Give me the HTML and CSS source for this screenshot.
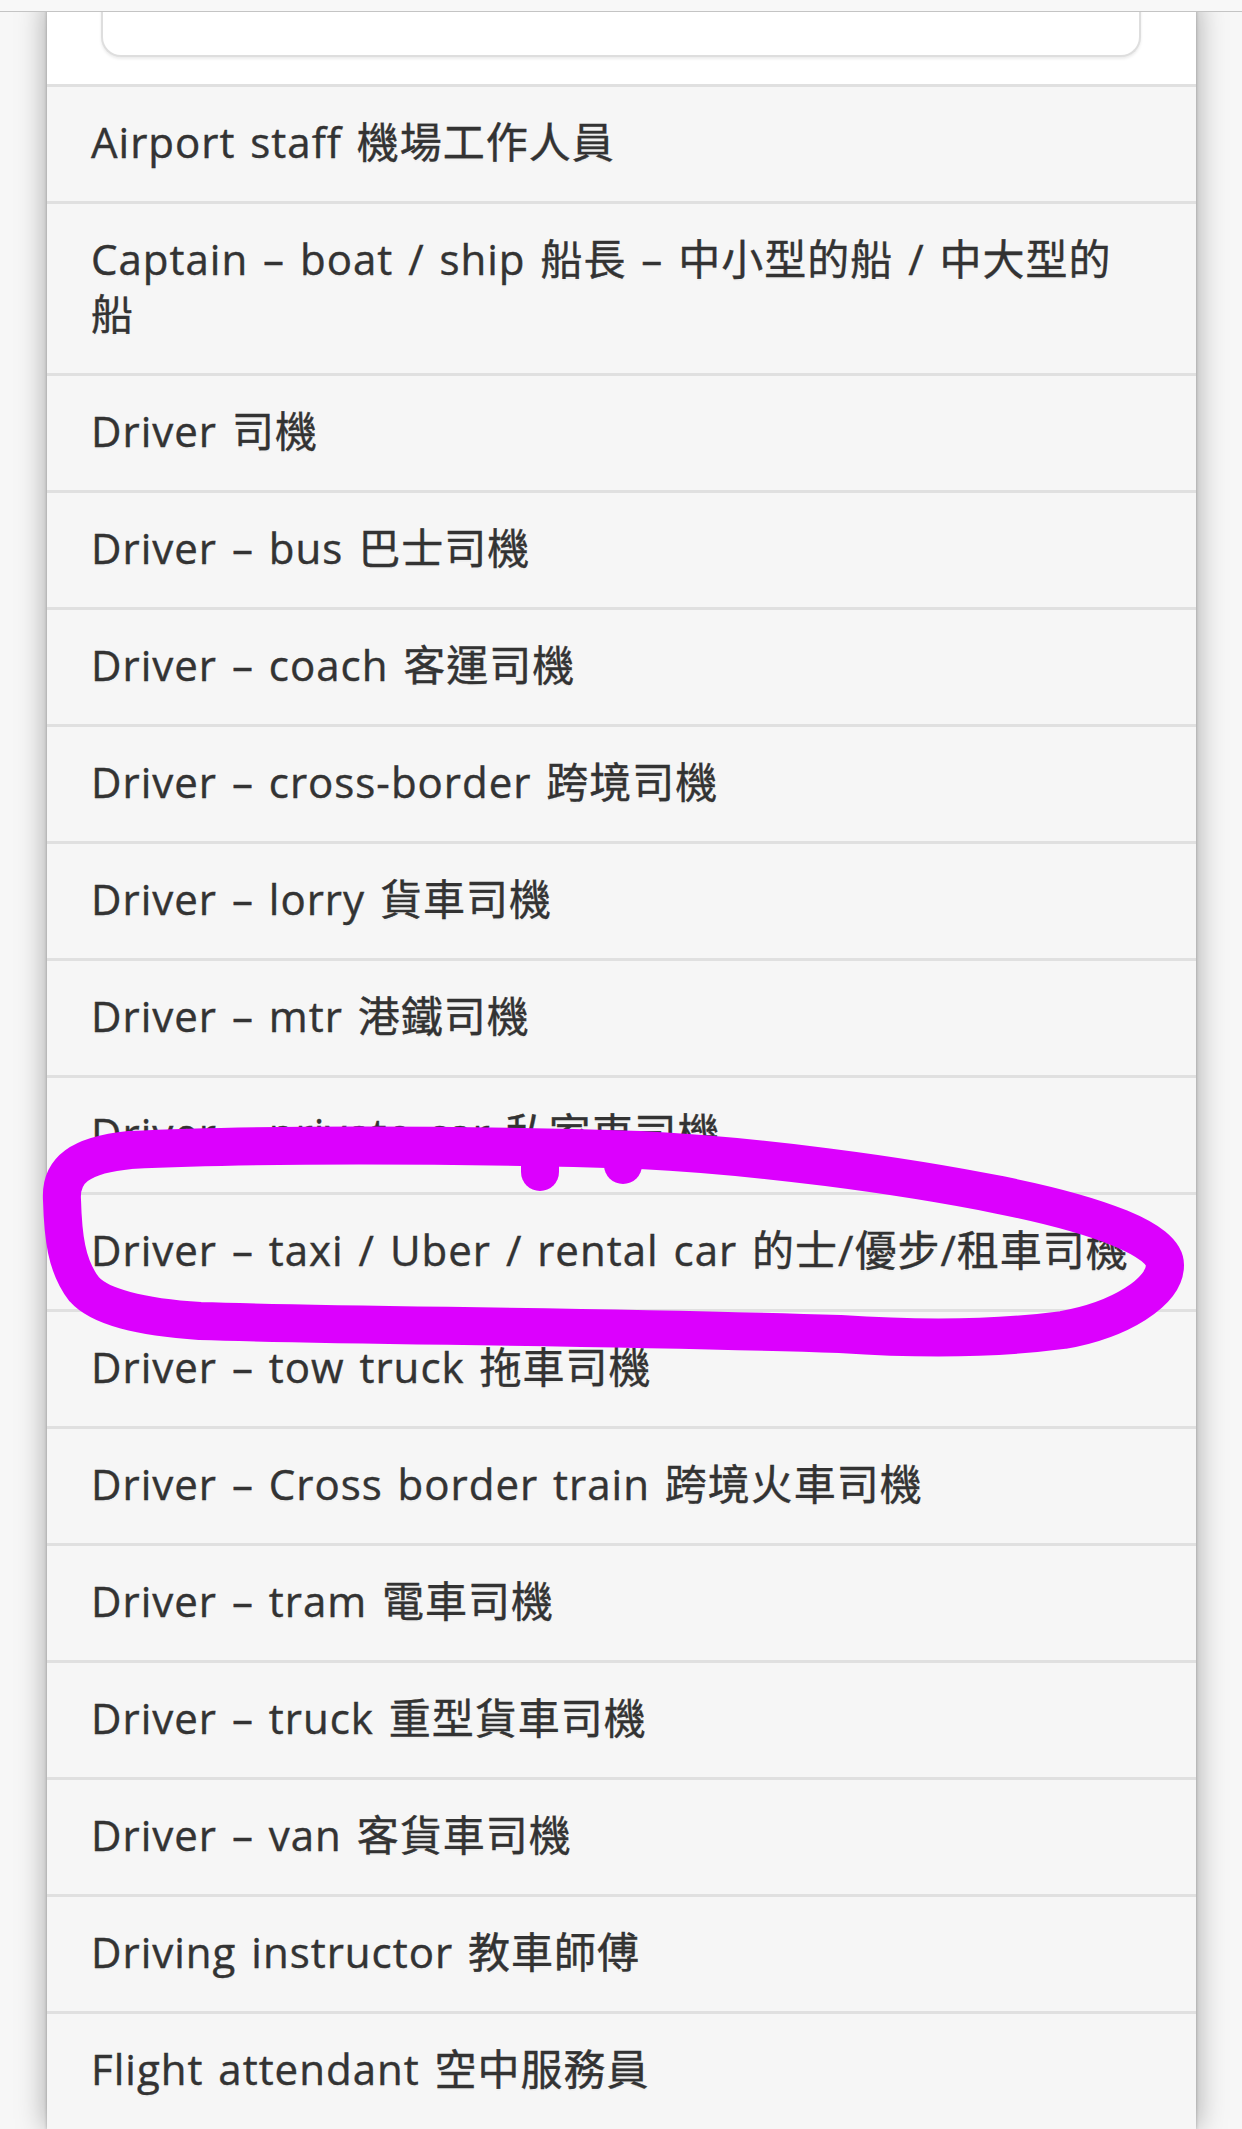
FILE: index.html
```html
<!DOCTYPE html>
<html lang="zh-Hant">
<head>
  <meta charset="utf-8">
  <title>職業</title>
  <meta name="viewport" content="width=device-width, initial-scale=1">
  <link rel="stylesheet" href="styles.css">
</head>
<body>
  <header class="topbar"></header>
  <main class="panel">
    <div class="search"><div class="search-box"></div></div>
    <ul class="listview">
      <li>Airport staff 機場工作人員</li>
      <li>Captain – boat / ship 船長 – 中小型的船 / 中大型的船</li>
      <li>Driver 司機</li>
      <li>Driver – bus 巴士司機</li>
      <li>Driver – coach 客運司機</li>
      <li>Driver – cross-border 跨境司機</li>
      <li>Driver – lorry 貨車司機</li>
      <li>Driver – mtr 港鐵司機</li>
      <li>Driver – private car 私家車司機</li>
      <li>Driver – taxi / Uber / rental car 的士/優步/租車司機</li>
      <li>Driver – tow truck 拖車司機</li>
      <li>Driver – Cross border train 跨境火車司機</li>
      <li>Driver – tram 電車司機</li>
      <li>Driver – truck 重型貨車司機</li>
      <li>Driver – van 客貨車司機</li>
      <li>Driving instructor 教車師傅</li>
      <li>Flight attendant 空中服務員</li>
    </ul>
  </main>
  <!-- hand-drawn highlight loop on top of the list -->
  <svg class="scribble" width="1242" height="2129" viewBox="0 0 1242 2129">
    <g fill="none" stroke="#dc00fe" stroke-width="38" stroke-linecap="round" stroke-linejoin="round">
      <path d="M62,1200 C60,1170 80,1155 130,1150 C250,1144 450,1144 640,1150 C760,1156 900,1175 1000,1195 C1100,1215 1165,1240 1165,1265 C1165,1292 1120,1320 1063,1330 C980,1341 900,1338 840,1334 C600,1326 350,1326 200,1321 C140,1317 100,1307 84,1289 C66,1266 63,1235 62,1200 Z"/>
      <path d="M540,1165 L540,1172"/>
      <path d="M623,1164 L623,1165"/>
    </g>
  </svg>
</body>
</html>
```
FILE: styles.css
```css
* {
  margin: 0;
  padding: 0;
  box-sizing: border-box;
}

:root {
  --page: #f7f7f7;
  --item: #f6f6f6;
  --line: #e0e0e0;
  --text: #333;
}

body {
  background: var(--page);
  color: var(--text);
  font-family: "Open Sans", "Noto Sans CJK TC", sans-serif;
  font-size: 42px;
  overflow: hidden;
}

.topbar {
  position: fixed;
  top: 0;
  left: 0;
  right: 0;
  height: 12px;
  background: #f8f8f8;
  border-bottom: 1px solid #c4c4c4;
  z-index: 2;
}

.panel {
  margin: 0 46px 0 47px;
  background: var(--item);
  min-height: 2129px;
  box-shadow: 0 0 3px rgba(0, 0, 0, .25), 0 0 28px rgba(0, 0, 0, .35);
}

.search {
  background: #fff;
  padding: 0 55px 27px 54px;
}

.search-box {
  height: 57px;
  background: #fff;
  border: 2px solid #dedede;
  border-top: 0;
  border-radius: 0 0 20px 20px;
  box-shadow: 0 2px 3px rgba(0, 0, 0, .08);
}

.listview {
  list-style: none;
  background: var(--item);
}

.listview li {
  border-top: 3px solid var(--line);
  padding: 26.5px 52px 32.5px 44px;
  line-height: 55px;
  letter-spacing: 1px;
  word-spacing: 3px;
  -webkit-text-stroke: .4px var(--text);
  text-shadow: 0 2px 0 #f0f0f0;
}

.scribble {
  position: absolute;
  top: 0;
  left: 0;
  pointer-events: none;
  z-index: 1;
}
```
